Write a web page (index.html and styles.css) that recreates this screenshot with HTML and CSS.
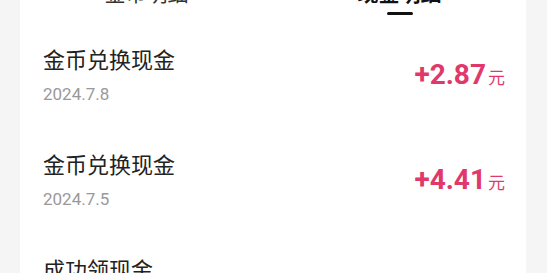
FILE: index.html
```html
<!DOCTYPE html>
<html lang="zh-CN">
<head>
  <meta charset="UTF-8">
  <meta name="viewport" content="width=device-width, initial-scale=1.0">
  <title>现金明细</title>
  <link rel="stylesheet" href="styles.css">
</head>
<body>
  <div class="card">
    <div class="tabs">
      <div class="tab">金币明细</div>
      <div class="tab active">现金明细</div>
    </div>

    <div class="record">
      <div class="info">
        <div class="title">金币兑换现金</div>
        <div class="date">2024.7.8</div>
      </div>
      <div class="amount">+2.87<span class="unit">元</span></div>
    </div>

    <div class="record">
      <div class="info">
        <div class="title">金币兑换现金</div>
        <div class="date">2024.7.5</div>
      </div>
      <div class="amount">+4.41<span class="unit">元</span></div>
    </div>

    <div class="record">
      <div class="info">
        <div class="title">成功领现金</div>
        <div class="date">2024.7.3</div>
      </div>
      <div class="amount">+0.30<span class="unit">元</span></div>
    </div>
  </div>
</body>
</html>
```

FILE: styles.css
```css
body {
  margin: 0;
  background-color: #f5f5f5;
  font-family: Roboto, "Noto Sans CJK SC", sans-serif;
}

.card {
  margin: -22px 21px 0 20px;
  background-color: #fff;
}

.tabs {
  display: flex;
  padding-bottom: 8px;
}

.tab {
  flex: 1;
  display: flex;
  flex-direction: column;
  align-items: center;
  font-family: "Noto Sans CJK SC", sans-serif;
  font-size: 21px;
  line-height: 28px;
  color: #333;
}

.tab.active {
  font-weight: bold;
  color: #111;
}

.tab.active::after {
  content: "";
  width: 26px;
  height: 3px;
  margin-top: 6px;
  border-radius: 2px;
  background-color: #111;
}

.record {
  display: flex;
  align-items: center;
  justify-content: space-between;
  padding: 21px 21px 23px 23px;
}

.title {
  font-family: "Noto Sans CJK SC", sans-serif;
  font-size: 22px;
  line-height: 28px;
  color: #222;
}

.date {
  margin-top: 11px;
  font-size: 17px;
  line-height: 22px;
  color: #999;
}

.amount {
  margin-top: 2px;
  font-size: 28px;
  font-weight: bold;
  line-height: 34px;
  color: #e1386b;
}

.unit {
  margin-left: 2px;
  font-family: "Noto Sans CJK SC", sans-serif;
  font-size: 17px;
  font-weight: normal;
}
```
